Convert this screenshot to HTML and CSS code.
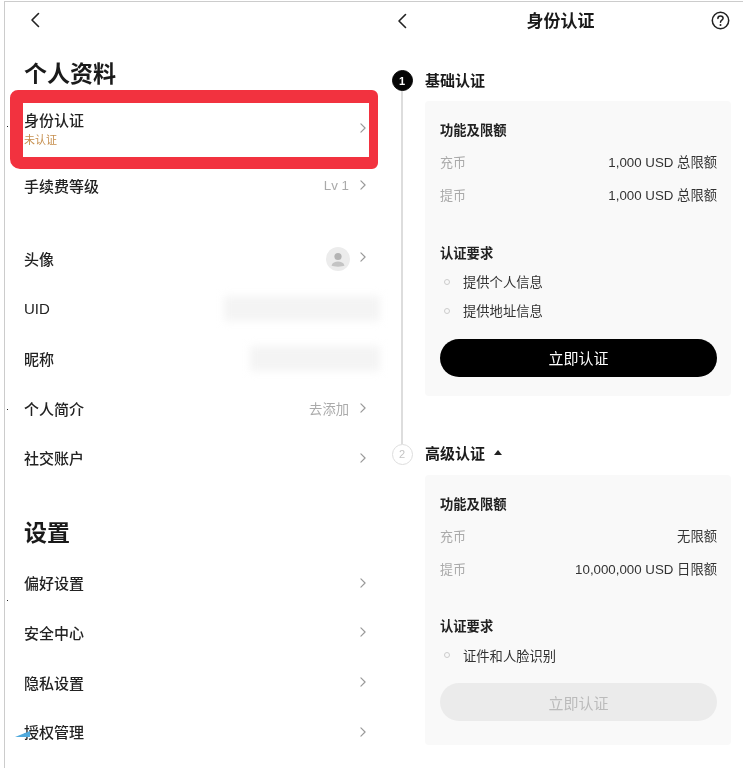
FILE: index.html
```html
<!DOCTYPE html>
<html lang="zh-CN">
<head>
  <meta charset="UTF-8">
  <meta name="viewport" content="width=device-width, initial-scale=1.0">
  <title>身份认证</title>
  <link rel="stylesheet" href="styles.css">
</head>
<body>
  <div class="page">
    <!-- profile list -->
    <section class="left">
      <div class="topbar">
        <svg class="back" width="10" height="16" viewBox="0 0 10 16"><path d="M8.500 1.500 2 8l6.500 6.500"/></svg>
      </div>

      <h1 class="title">个人资料</h1>

      <div class="row row-identity">
        <div class="stack">
          <span>身份认证</span>
          <span class="unverified">未认证</span>
        </div>
        <svg class="chev" width="6" height="10" viewBox="0 0 7 12"><path d="M1 1l5 5-5 5"/></svg>
        <div class="highlight"></div>
      </div>
      <div class="row row-fee">
        <span>手续费等级</span>
        <span class="extra">Lv 1</span>
        <svg class="chev" width="6" height="10" viewBox="0 0 7 12"><path d="M1 1l5 5-5 5"/></svg>
      </div>

      <div class="group">
        <div class="row">
          <span>头像</span>
          <svg class="avatar" width="24" height="24" viewBox="0 0 24 24">
            <circle cx="12" cy="12" r="12" fill="#ececec"/>
            <circle cx="12" cy="9.500" r="3.600" fill="#b4b4b4"/>
            <path d="M5.500 18.500c1-3 3.500-4 6.500-4s5.500 1 6.500 4c-2 1.500-11 1.500-13 0z" fill="#c4c4c4"/>
          </svg>
          <svg class="chev chev-up" width="6" height="10" viewBox="0 0 7 12"><path d="M1 1l5 5-5 5"/></svg>
        </div>
        <div class="row">
          <span>UID</span>
          <div class="mask mask-uid"></div>
        </div>
        <div class="row">
          <span>昵称</span>
          <div class="mask mask-nick"></div>
        </div>
        <div class="row">
          <span>个人简介</span>
          <span class="extra">去添加</span>
          <svg class="chev" width="6" height="10" viewBox="0 0 7 12"><path d="M1 1l5 5-5 5"/></svg>
        </div>
        <div class="row">
          <span>社交账户</span>
          <svg class="chev" width="6" height="10" viewBox="0 0 7 12"><path d="M1 1l5 5-5 5"/></svg>
        </div>
      </div>

      <h1 class="title title-settings">设置</h1>

      <div class="group-settings">
        <div class="row">
          <span>偏好设置</span>
          <svg class="chev" width="6" height="10" viewBox="0 0 7 12"><path d="M1 1l5 5-5 5"/></svg>
        </div>
        <div class="row">
          <span>安全中心</span>
          <svg class="chev" width="6" height="10" viewBox="0 0 7 12"><path d="M1 1l5 5-5 5"/></svg>
        </div>
        <div class="row">
          <span>隐私设置</span>
          <svg class="chev" width="6" height="10" viewBox="0 0 7 12"><path d="M1 1l5 5-5 5"/></svg>
        </div>
        <div class="row">
          <span>授权管理</span>
          <svg class="chev" width="6" height="10" viewBox="0 0 7 12"><path d="M1 1l5 5-5 5"/></svg>
          <div class="wedge"></div>
        </div>
      </div>

      <i class="speck speck-a"></i>
      <i class="speck speck-b"></i>
      <i class="speck speck-c"></i>
    </section>

    <!-- verification steps -->
    <section class="right">
      <div class="header">
        <svg class="back" width="10" height="16" viewBox="0 0 10 16"><path d="M8.500 1.500 2 8l6.500 6.500"/></svg>
        <h2 class="header-title">身份认证</h2>
        <svg class="help" width="19" height="19" viewBox="0 0 19 19">
          <circle cx="9.500" cy="9.500" r="8.200"/>
          <path d="M6.900 7.500c0-1.500 1.100-2.500 2.600-2.500s2.600 1 2.600 2.300c0 1.900-2.600 1.900-2.600 4"/>
          <circle class="help-dot" cx="9.500" cy="14" r="1"/>
        </svg>
      </div>

      <div class="step step-first">
        <div class="marker">
          <span class="num num-on">1</span>
          <span class="line"></span>
        </div>
        <div class="body">
          <div class="step-head">基础认证</div>
          <div class="card">
            <div class="card-title">功能及限额</div>
            <div class="limit"><span class="limit-name">充币</span><span>1,000 USD 总限额</span></div>
            <div class="limit"><span class="limit-name">提币</span><span>1,000 USD 总限额</span></div>
            <div class="card-title req-title">认证要求</div>
            <div class="req"><i class="dot"></i>提供个人信息</div>
            <div class="req"><i class="dot"></i>提供地址信息</div>
            <button class="btn">立即认证</button>
          </div>
        </div>
      </div>

      <div class="step">
        <div class="marker">
          <span class="num">2</span>
        </div>
        <div class="body">
          <div class="step-head">高级认证<i class="caret"></i></div>
          <div class="card card-second">
            <div class="card-title">功能及限额</div>
            <div class="limit"><span class="limit-name">充币</span><span>无限额</span></div>
            <div class="limit"><span class="limit-name">提币</span><span>10,000,000 USD 日限额</span></div>
            <div class="card-title req-title">认证要求</div>
            <div class="req"><i class="dot"></i>证件和人脸识别</div>
            <button class="btn btn-off">立即认证</button>
          </div>
        </div>
      </div>
    </section>
  </div>
</body>
</html>
```

FILE: styles.css
```css
body {
  margin: 0;
  background-color: #fff;
  color: #222;
  font-family: "Liberation Sans", "Noto Sans CJK SC", sans-serif;
  font-size: 15px;
}
svg {
  display: block;
  flex: none;
}
.page {
  display: flex;
  height: 766px;
  margin: 1px 0 0 4px;
  border-top: 1px solid #ccc;
  border-left: 1px solid #ccc;
  overflow: hidden;
  filter: blur(0.35px);
}

/* left column */
.left {
  position: relative;
  width: 375px;
  box-sizing: border-box;
  padding-left: 19px;
}
.topbar {
  height: 38px;
  padding: 10px 0 0 6px;
  box-sizing: border-box;
}
.back path,
.chev path,
.help path,
.help circle {
  fill: none;
  stroke-linecap: round;
  stroke-linejoin: round;
}
.back path {
  stroke: #222;
  stroke-width: 1.600;
}
.title {
  margin: 18px 0 0;
  font-size: 23px;
  line-height: 32px;
  font-weight: 700;
  color: #1a1a1a;
}
.row {
  position: relative;
  display: flex;
  align-items: center;
  height: 49.750px;
  padding-right: 14px;
  font-weight: 500;
}
.row > span:first-child {
  margin-right: auto;
}
.row-identity {
  height: 79px;
  padding-bottom: 3px;
  box-sizing: border-box;
}
.row-fee {
  height: 36px;
  padding-bottom: 4px;
  box-sizing: border-box;
}
.stack {
  display: flex;
  flex-direction: column;
  margin-right: auto;
}
.unverified {
  margin-top: 3px;
  font-size: 11px;
  line-height: 15px;
  font-weight: 400;
  color: #c68f4e;
}
.extra {
  margin-right: 11px;
  font-size: 13.300px;
  font-weight: 400;
  color: #aaa;
}
.chev path {
  stroke: #999;
  stroke-width: 1.400;
}
.chev-up {
  margin-top: -4px;
}
.avatar {
  margin-right: 10px;
}
.highlight {
  position: absolute;
  left: -14px;
  top: 0;
  width: 368px;
  height: 79px;
  box-sizing: border-box;
  border: solid #f2323f;
  border-width: 13px 9px 12px 13px;
  border-radius: 8px 6px 6px 10px;
}
.group {
  margin-top: 29px;
}
.title-settings {
  margin-top: 34px;
}
.group-settings {
  margin-top: 9px;
}
.mask {
  height: 25px;
  margin-right: -14px;
  background-color: #f4f4f4;
  filter: blur(4px);
}
.mask-uid {
  width: 156px;
}
.mask-nick {
  width: 130px;
}
.wedge {
  position: absolute;
  left: -9px;
  top: 24px;
  width: 15px;
  height: 6px;
  background-color: #4fa9dc;
  clip-path: polygon(0 100%, 100% 0, 100% 100%);
}
.speck {
  position: absolute;
  left: 2px;
  width: 1px;
  height: 1px;
  background-color: #222;
}
.speck-a {
  top: 124px;
}
.speck-b {
  top: 407px;
}
.speck-c {
  top: 598px;
}

/* right column */
.right {
  flex: 1;
  box-sizing: border-box;
  padding: 0 12px 0 11px;
}
.header {
  position: relative;
  display: flex;
  align-items: center;
  justify-content: space-between;
  height: 37px;
  padding: 0 1px 0 6px;
  margin-bottom: 31px;
}
.header-title {
  position: absolute;
  left: 0;
  right: 1px;
  margin: -2px 0 0;
  text-align: center;
  font-size: 17px;
  font-weight: 700;
  color: #1a1a1a;
}
.help circle,
.help path {
  stroke: #222;
  stroke-width: 1.500;
}
.help .help-dot {
  fill: #222;
  stroke: none;
}
.step {
  display: flex;
  gap: 12px;
}
.step-first {
  padding-bottom: 48px;
}
.marker {
  display: flex;
  flex-direction: column;
  align-items: center;
  width: 22px;
}
.step-first .marker {
  margin-bottom: -48px;
}
.num {
  display: flex;
  align-items: center;
  justify-content: center;
  width: 21px;
  height: 21px;
  box-sizing: border-box;
  border: 1.500px solid #ddd;
  border-radius: 50%;
  font-size: 11px;
  color: #c4c4c4;
  flex: none;
}
.num-on {
  background-color: #050505;
  border-color: #050505;
  color: #fff;
  font-weight: 700;
}
.line {
  flex: 1;
  width: 2px;
  background-color: #ddd;
}
.body {
  flex: 1;
}
.step-head {
  display: flex;
  align-items: center;
  height: 21px;
  padding-bottom: 3px;
  box-sizing: border-box;
  margin-bottom: 10px;
  font-weight: 700;
  color: #1a1a1a;
}
.caret {
  width: 0;
  height: 0;
  margin-left: 9px;
  border: 4px solid transparent;
  border-top: 0;
  border-bottom: 5px solid #222;
}
.card {
  padding: 19px 14px 19px 15px;
  background-color: #f9f9f9;
  border-radius: 4px;
}
.card-second {
  padding-bottom: 24px;
}
.card-title {
  font-size: 13.300px;
  line-height: 22px;
  font-weight: 700;
  color: #222;
}
.limit {
  display: flex;
  justify-content: space-between;
  align-items: center;
  height: 33px;
  font-size: 13.300px;
  color: #333;
}
.card-title + .limit {
  margin-top: 3px;
}
.limit-name {
  font-size: 13px;
  color: #aaa;
}
.req-title {
  margin-top: 31.500px;
  margin-bottom: 2.500px;
}
.req {
  display: flex;
  align-items: center;
  height: 29px;
  font-size: 13.300px;
  color: #333;
}
.dot {
  width: 6px;
  height: 6px;
  box-sizing: border-box;
  margin: 0 13px 0 4px;
  border: 1.500px solid #ccc;
  border-radius: 50%;
}
.btn {
  display: block;
  width: 100%;
  height: 38px;
  margin-top: 13.500px;
  border: none;
  border-radius: 19px;
  background-color: #000;
  color: #fff;
  font-family: inherit;
  font-size: 15px;
}
.btn-off {
  background-color: #ebebeb;
  color: #bbb;
}
```
